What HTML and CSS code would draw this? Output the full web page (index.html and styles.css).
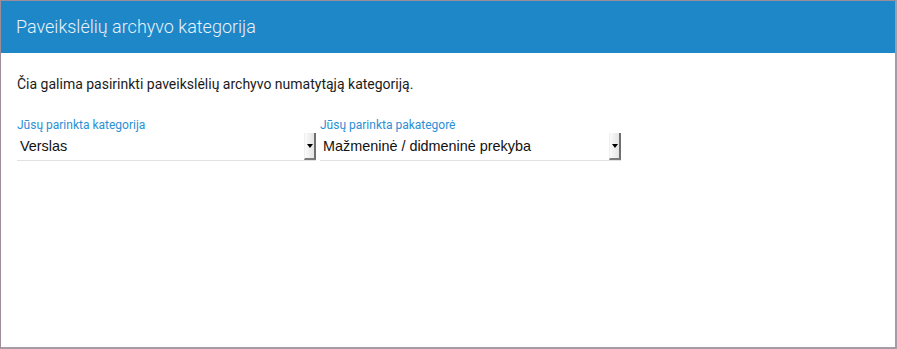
FILE: index.html
```html
<!DOCTYPE html>
<html lang="lt">
<head>
  <meta charset="UTF-8">
  <title>Paveikslėlių archyvo kategorija</title>
  <link rel="stylesheet" href="styles.css">
</head>
<body>
  <div class="dialog">
    <div class="dialog-header">Paveikslėlių archyvo kategorija</div>
    <div class="dialog-body">
      <p class="intro">Čia galima pasirinkti paveikslėlių archyvo numatytąją kategoriją.</p>
      <div class="fields">
        <div class="field">
          <label class="field-label">Jūsų parinkta kategorija</label>
          <div class="select">
            <span class="select-value">Verslas</span>
            <span class="select-btn"><span class="arrow"></span></span>
          </div>
        </div>
        <div class="field">
          <label class="field-label">Jūsų parinkta pakategorė</label>
          <div class="select">
            <span class="select-value">Mažmeninė / didmeninė prekyba</span>
            <span class="select-btn"><span class="arrow"></span></span>
          </div>
        </div>
      </div>
    </div>
  </div>
</body>
</html>
```

FILE: styles.css
```css
html, body {
  margin: 0;
  padding: 0;
}

body {
  font-family: Roboto, 'Liberation Sans', sans-serif;
  background: #ffffff;
}

.dialog {
  width: 897px;
  height: 349px;
  box-sizing: border-box;
  border: 1px solid #9c8d98;
  border-right-width: 2px;
  border-bottom-width: 2px;
  border-right-color: #a89aa4;
  border-bottom-color: #a89aa4;
  background: #ffffff;
}

.dialog-header {
  height: 52px;
  background-color: #1e87c8;
  color: #e8f2fa;
  font-size: 18px;
  font-weight: 300;
  line-height: 52px;
  padding-left: 15px;
}

.dialog-body {
  padding: 22px 16px;
}

.intro {
  margin: 0 0 25px;
  font-size: 14px;
  color: #1b1b1b;
  line-height: 18px;
}

.fields {
  display: flex;
  gap: 4px;
}

.field {
  width: 299px;
  display: flex;
  flex-direction: column;
}

.field:last-child {
  width: 301px;
}

.field-label {
  font-size: 12px;
  color: #2a8fd5;
  line-height: 14px;
}

/* fake native select */
.select {
  display: flex;
  align-items: stretch;
  height: 28px;
  border-bottom: 1px solid #e1e1e1;
}

.select-value {
  flex: 1;
  font-family: 'Liberation Sans', Arial, sans-serif;
  font-size: 14.4px;
  color: #111111;
  line-height: 28px;
  padding-left: 3px;
}

.select-btn {
  width: 9px;
  margin-top: 1px;
  background: linear-gradient(90deg, #fbfbfb, #e4e4e4);
  border-left: 1px solid #f0f0f0;
  border-right: 2px solid #6f6f6f;
  border-bottom: 2px solid #7a7a7a;
  display: flex;
  align-items: center;
  justify-content: center;
}

.arrow {
  width: 0;
  height: 0;
  border-left: 3px solid transparent;
  border-right: 3px solid transparent;
  border-top: 4px solid #000000;
}
```
